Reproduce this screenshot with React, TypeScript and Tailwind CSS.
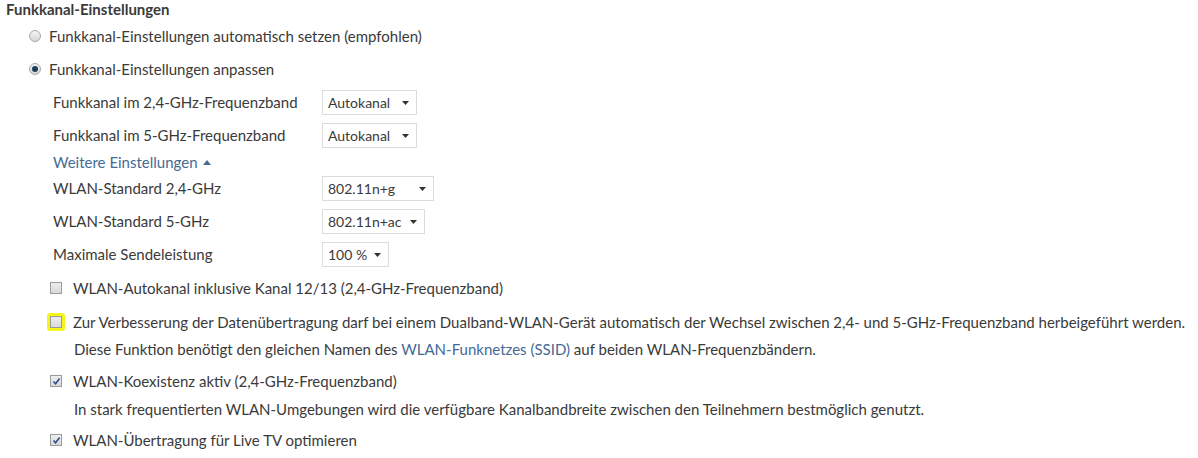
import React from 'react';

const Radio: React.FC<{ checked?: boolean }> = ({ checked }) => (
  <span className="flex h-[12px] w-[12px] items-center justify-center rounded-full border border-[#a9a9a9] bg-gradient-to-b from-[#f4f4f4] to-[#d6d6d6]">
    {checked && <span className="h-[6px] w-[6px] rounded-full bg-[#1f3d5c]" />}
  </span>
);

const Check: React.FC<{ checked?: boolean; marked?: boolean }> = ({ checked, marked }) => (
  <span className={marked ? 'flex h-[18px] w-[18px] items-center justify-center rounded-[3px] bg-[#f5f51c]' : 'flex h-[18px] w-[18px] items-center justify-center'}>
    <span className="flex h-[12px] w-[12px] items-center justify-center border border-[#9b9b9b] bg-gradient-to-b from-[#eeeeee] to-[#d9d9d9]">
      {checked && (
        <svg width="9" height="9" viewBox="0 0 9 9">
          <path d="M1.5 4.5 L3.6 6.8 L7.6 1.6" fill="none" stroke="#2c4f86" strokeWidth="1.6" />
        </svg>
      )}
    </span>
  </span>
);

const Select: React.FC<{ value: string; width: string }> = ({ value, width }) => (
  <div className={`flex h-[25px] items-center justify-between border border-[#dcdcdc] bg-white pl-[5px] pr-[7px] text-[14px] ${width}`}>
    <span>{value}</span>
    <svg width="7" height="4" viewBox="0 0 7 4">
      <path d="M0 0 H7 L3.5 4 Z" fill="#333" />
    </svg>
  </div>
);

const SettingRow: React.FC<{ label: string; children: React.ReactNode }> = ({ label, children }) => (
  <div className="flex h-[33px] items-center">
    <span className="w-[269px]">{label}</span>
    {children}
  </div>
);

const CheckRow: React.FC<{ label: string; checked?: boolean; marked?: boolean; h: string }> = ({ label, checked, marked, h }) => (
  <div className={`flex items-center ${h}`}>
    <span className="flex w-[23px] items-center">
      <span className="-ml-[3px]">
        <Check checked={checked} marked={marked} />
      </span>
    </span>
    <span>{label}</span>
  </div>
);

export default function App() {
  return (
    <div className="h-[458px] w-[1198px] overflow-hidden bg-white pl-[6px] text-[15px] text-[#3a3a3a]" style={{ fontFamily: 'Lato, "Noto Sans", sans-serif' }}>
      <div className="flex h-[20px] items-end font-bold">Funkkanal-Einstellungen</div>

      <div className="ml-[23px]">
        <div className="flex h-[32px] items-center gap-[8px]">
          <Radio />
          <span>Funkkanal-Einstellungen automatisch setzen (empfohlen)</span>
        </div>
        <div className="flex h-[34px] items-center gap-[8px]">
          <Radio checked />
          <span>Funkkanal-Einstellungen anpassen</span>
        </div>
      </div>

      <div className="ml-[47px]">
        <SettingRow label="Funkkanal im 2,4-GHz-Frequenzband">
          <Select value="Autokanal" width="w-[95px]" />
        </SettingRow>
        <SettingRow label="Funkkanal im 5-GHz-Frequenzband">
          <Select value="Autokanal" width="w-[95px]" />
        </SettingRow>
        <div className="flex h-[20px] items-center gap-[5px] text-[#456a94]">
          <span>Weitere Einstellungen</span>
          <svg width="8" height="5" viewBox="0 0 8 5">
            <path d="M0 5 H8 L4 0 Z" fill="#456a94" />
          </svg>
        </div>
        <SettingRow label="WLAN-Standard 2,4-GHz">
          <Select value="802.11n+g" width="w-[112px]" />
        </SettingRow>
        <SettingRow label="WLAN-Standard 5-GHz">
          <Select value="802.11n+ac" width="w-[103px]" />
        </SettingRow>
        <SettingRow label="Maximale Sendeleistung">
          <Select value="100 %" width="w-[67px]" />
        </SettingRow>

        <div className="-ml-[3px]">
          <CheckRow h="h-[34px]" label="WLAN-Autokanal inklusive Kanal 12/13 (2,4-GHz-Frequenzband)" />
          <CheckRow
            h="h-[34px]"
            marked
            label="Zur Verbesserung der Datenübertragung darf bei einem Dualband-WLAN-Gerät automatisch der Wechsel zwischen 2,4- und 5-GHz-Frequenzband herbeigeführt werden."
          />
          <div className="flex h-[20px] items-center pl-[24px]">
            <span>
              Diese Funktion benötigt den gleichen Namen des{' '}
              <span className="text-[#456a94]">WLAN-Funknetzes (SSID)</span> auf beiden WLAN-Frequenzbändern.
            </span>
          </div>
          <div className="mt-[6px]">
            <CheckRow h="h-[32px]" checked label="WLAN-Koexistenz aktiv (2,4-GHz-Frequenzband)" />
          </div>
          <div className="flex h-[24px] items-center pl-[24px]">
            In stark frequentierten WLAN-Umgebungen wird die verfügbare Kanalbandbreite zwischen den Teilnehmern bestmöglich genutzt.
          </div>
          <div className="mt-[3px]">
            <CheckRow h="h-[32px]" checked label="WLAN-Übertragung für Live TV optimieren" />
          </div>
        </div>
      </div>
    </div>
  );
}
